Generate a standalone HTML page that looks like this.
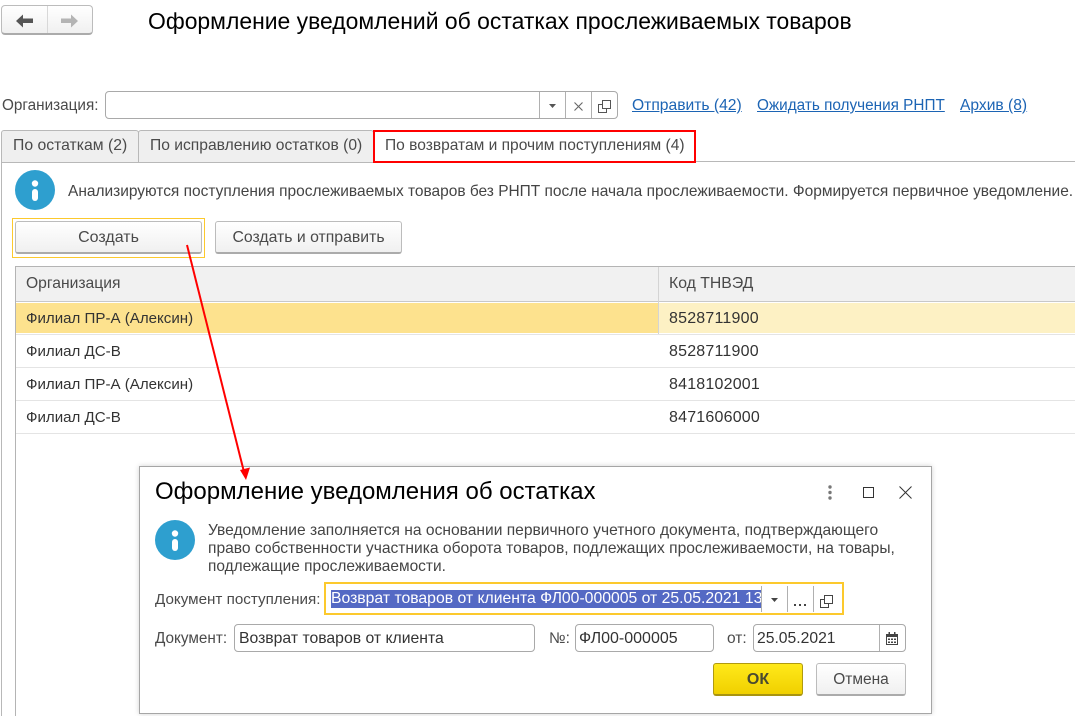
<!DOCTYPE html>
<html lang="ru"><head><meta charset="utf-8"><title>Оформление уведомлений</title>
<style>
html,body{margin:0;padding:0;background:#fff}
body{width:1075px;height:716px;position:relative;overflow:hidden;font-family:"Liberation Sans",Arial,sans-serif;font-size:15.5px;color:#4a4a4a}
.a{position:absolute;box-sizing:border-box}
.t{position:absolute;white-space:nowrap;line-height:18px;height:18px}
.btn{position:absolute;box-sizing:border-box;border:1px solid #bcbcbc;border-bottom:2px solid #ababab;border-radius:3px;background:linear-gradient(#fff,#f0f0f0);text-align:center;color:#4a4a4a}
.fld{position:absolute;box-sizing:border-box;border:1px solid #a9a9a9;border-radius:4px;background:#fff}
.v{position:absolute;width:1px;background:#b0b0b0}
.d{color:#333}
.r{font-size:15.1px}
.n{font-size:16px;letter-spacing:.2px}
a{color:#1c64b4;text-decoration:underline}
</style></head><body>

<!-- nav -->
<div class="btn" style="left:1px;top:5px;width:92px;height:30px;border-radius:4px"></div>
<div class="v" style="left:47px;top:6px;height:27px;background:#d8d8d8"></div>
<svg class="a" style="left:16px;top:14px" width="18" height="14"><path d="M0 7L7 .5V4.500H17V9H7V13.500Z" fill="#555"/></svg>
<svg class="a" style="left:61px;top:14px" width="18" height="14"><path d="M17 7L10 .5V4.500H0V9H10V13.500Z" fill="#b4b4b4"/></svg>
<div class="t" style="left:148px;top:8px;font-size:22.93px;line-height:26px;height:26px;color:#000">Оформление уведомлений об остатках прослеживаемых товаров</div>

<!-- org row -->
<div class="t" style="left:2px;top:97px;font-size:15.3px">Организация:</div>
<div class="fld" style="left:105px;top:91px;width:513px;height:28px"></div>
<div class="v" style="left:539px;top:92px;height:26px"></div>
<div class="v" style="left:565px;top:92px;height:26px"></div>
<div class="v" style="left:591px;top:92px;height:26px"></div>
<svg class="a" style="left:549px;top:104px" width="7" height="4"><path d="M0 0H7L3.500 4Z" fill="#555"/></svg>
<svg class="a" style="left:574px;top:102px" width="9" height="9"><path d="M.5 .5L8.500 8.500M8.500 .5L.5 8.500" stroke="#666" stroke-width="1.100" fill="none"/></svg>
<svg class="a" style="left:598px;top:100px" width="13" height="13"><path d="M4.500 .5H12.500V8.500H4.500ZM4.500 4.500H.5V12.500H8.500V8.500" stroke="#555" fill="none"/></svg>
<a class="t" style="left:632px;top:97px;font-size:15.65px">Отправить (42)</a>
<a class="t" style="left:757px;top:97px;font-size:15.32px">Ожидать получения РНПТ</a>
<a class="t" style="left:960px;top:97px;font-size:15.6px">Архив (8)</a>

<!-- tabs -->
<div class="a" style="left:1px;top:130px;width:138px;height:33px;background:#efefef;border:1px solid #b8b8b8;border-radius:3px 3px 0 0"></div>
<div class="a" style="left:138px;top:130px;width:236px;height:33px;background:#efefef;border:1px solid #b8b8b8;border-radius:3px 3px 0 0"></div>
<div class="a" style="left:374px;top:161px;width:701px;height:1px;background:#b8b8b8"></div>
<div class="a" style="left:1px;top:162px;width:1px;height:554px;background:#b8b8b8"></div>
<div class="a" style="left:373px;top:130px;width:323px;height:33px;border:2px solid #f00"></div>
<div class="t" style="left:13px;top:137px;font-size:15.75px">По остаткам (2)</div>
<div class="t" style="left:150px;top:137px;font-size:15.63px">По исправлению остатков (0)</div>
<div class="t" style="left:385px;top:137px;font-size:15.55px">По возвратам и прочим поступлениям (4)</div>

<!-- info -->
<svg class="a" style="left:15px;top:170px" width="40" height="40"><circle cx="20" cy="20" r="20" fill="#2e9fcf"/><circle cx="20" cy="13.500" r="3.200" fill="#fff"/><rect x="17" y="19" width="6" height="12" rx="3" fill="#fff"/></svg>
<div class="t" style="left:68px;top:183px;color:#444;font-size:15.48px">Анализируются поступления прослеживаемых товаров без РНПТ после начала прослеживаемости. Формируется первичное уведомление.</div>

<!-- buttons -->
<div class="a" style="left:12px;top:218px;width:193px;height:40px;border:1px solid #fcc92d"></div>
<div class="btn" style="left:15px;top:221px;width:187px;height:33px;line-height:32px;font-size:16px">Создать</div>
<div class="btn" style="left:215px;top:221px;width:187px;height:33px;line-height:32px;font-size:15.8px">Создать и отправить</div>

<!-- grid -->
<div class="a" style="left:15px;top:266px;width:1060px;height:450px;border-left:1px solid #b4b4b4;border-top:1px solid #b4b4b4"></div>
<div class="a" style="left:16px;top:267px;width:1059px;height:35px;background:#f1f1f1;border-bottom:1px solid #c8c8c8"></div>
<div class="a" style="left:658px;top:267px;width:1px;height:67px;background:#d4d4d4"></div>
<div class="t" style="left:26px;top:275px;font-size:15.67px">Организация</div>
<div class="t" style="left:669px;top:275px;font-size:15.8px">Код ТНВЭД</div>
<div class="a" style="left:16px;top:303px;width:642px;height:30px;background:#fde28e"></div>
<div class="a" style="left:659px;top:303px;width:416px;height:30px;background:#fdf1c4"></div>
<div class="a" style="left:16px;top:334px;width:1059px;height:1px;background:#e4e4e4"></div>
<div class="a" style="left:16px;top:367px;width:1059px;height:1px;background:#e4e4e4"></div>
<div class="a" style="left:16px;top:400px;width:1059px;height:1px;background:#e4e4e4"></div>
<div class="a" style="left:16px;top:433px;width:1059px;height:1px;background:#e4e4e4"></div>
<div class="t d r" style="left:26px;top:310px">Филиал ПР-А (Алексин)</div><div class="t d n" style="left:669px;top:310px">8528711900</div>
<div class="t d r" style="left:26px;top:343px">Филиал ДС-В</div><div class="t d n" style="left:669px;top:343px">8528711900</div>
<div class="t d r" style="left:26px;top:376px">Филиал ПР-А (Алексин)</div><div class="t d n" style="left:669px;top:376px">8418102001</div>
<div class="t d r" style="left:26px;top:409px">Филиал ДС-В</div><div class="t d n" style="left:669px;top:409px">8471606000</div>

<!-- dialog -->
<div class="a" style="left:139px;top:466px;width:793px;height:248px;background:#fff;border:1px solid #a6a6a6;box-shadow:0 0 5px rgba(0,0,0,.18)"></div>
<div class="t" style="left:155px;top:478px;font-size:24px;line-height:28px;height:28px;color:#000">Оформление уведомления об остатках</div>
<svg class="a" style="left:827px;top:485px" width="6" height="15"><circle cx="3" cy="2" r="1.700" fill="#777"/><circle cx="3" cy="7.500" r="1.700" fill="#777"/><circle cx="3" cy="13" r="1.700" fill="#777"/></svg>
<div class="a" style="left:863px;top:487px;width:11px;height:11px;border:1px solid #333"></div>
<svg class="a" style="left:899px;top:486px" width="13" height="13"><path d="M.5 .5L12.500 12.500M12.500 .5L.5 12.500" stroke="#333" fill="none"/></svg>
<svg class="a" style="left:155px;top:520px" width="40" height="40"><circle cx="20" cy="20" r="20" fill="#2e9fcf"/><circle cx="20" cy="13.500" r="3.200" fill="#fff"/><rect x="17" y="19" width="6" height="12" rx="3" fill="#fff"/></svg>
<div class="t" style="left:208px;top:522px;color:#444;font-size:15.58px">Уведомление заполняется на основании первичного учетного документа, подтверждающего</div>
<div class="t" style="left:208px;top:540px;color:#444;font-size:15.6px">право собственности участника оборота товаров, подлежащих прослеживаемости, на товары,</div>
<div class="t" style="left:208px;top:558px;color:#444;font-size:15.45px">подлежащие прослеживаемости.</div>

<div class="t" style="left:155px;top:591px;font-size:15.2px">Документ поступления:</div>
<div class="a" style="left:324px;top:582px;width:520px;height:33px;border:2px solid #fcc92d"></div>
<div class="a" style="left:331px;top:590px;width:430px;height:18px;background:#5469c4;color:#fff;line-height:18px;white-space:nowrap;overflow:hidden;font-size:15.75px">Возврат товаров от клиента ФЛ00-000005 от 25.05.2021 13:00:00</div>
<div class="v" style="left:761px;top:586px;height:26px"></div>
<div class="v" style="left:787px;top:586px;height:26px"></div>
<div class="v" style="left:813px;top:586px;height:26px"></div>
<svg class="a" style="left:771px;top:598px" width="7" height="4"><path d="M0 0H7L3.500 4Z" fill="#444"/></svg>
<svg class="a" style="left:794px;top:604px" width="12" height="3"><path d="M0 0H2V2H0ZM5 0H7V2H5ZM10 0H12V2H10Z" fill="#444"/></svg>
<svg class="a" style="left:820px;top:595px" width="13" height="13"><path d="M4.500 .5H12.500V8.500H4.500ZM4.500 4.500H.5V12.500H8.500V8.500" stroke="#444" fill="none"/></svg>

<div class="t" style="left:155px;top:630px;font-size:15.3px">Документ:</div>
<div class="fld" style="left:234px;top:624px;width:301px;height:28px"></div>
<div class="t d" style="left:239px;top:630px;font-size:15.75px">Возврат товаров от клиента</div>
<div class="t" style="left:549px;top:630px">№:</div>
<div class="fld" style="left:575px;top:624px;width:139px;height:28px"></div>
<div class="t d" style="left:579px;top:630px;font-size:16px">ФЛ00-000005</div>
<div class="t" style="left:727px;top:630px">от:</div>
<div class="fld" style="left:753px;top:624px;width:153px;height:28px"></div>
<div class="v" style="left:879px;top:625px;height:26px"></div>
<div class="t d" style="left:757px;top:630px;font-size:15.7px">25.05.2021</div>
<svg class="a" style="left:886px;top:632px" width="13" height="13"><path d="M.5 3H11.500V12.500H.5Z" fill="none" stroke="#444"/><path d="M0 2H12V5H0ZM2.500 0H4V2H2.500ZM8 0H9.500V2H8ZM2 6.500H4V8H2ZM5 6.500H7V8H5ZM8 6.500H10V8H8ZM2 9.500H4V11H2ZM5 9.500H7V11H5ZM8 9.500H10V11H8Z" fill="#444"/></svg>

<div class="a" style="left:713px;top:663px;width:90px;height:33px;border:1px solid #b09a10;border-bottom:2px solid #a89410;border-radius:3px;background:linear-gradient(#ffe91a,#f0d000);text-align:center;font-weight:bold;line-height:32px;color:#4a4a30;font-size:16px">ОК</div>
<div class="btn" style="left:816px;top:663px;width:90px;height:33px;line-height:32px">Отмена</div>

<!-- arrow -->
<svg class="a" style="left:0;top:0;pointer-events:none" width="1075" height="716"><path d="M187 245L244 472" stroke="#f00" stroke-width="2" fill="none"/><path d="M246 480L240 470L250 467.500Z" fill="#f00"/></svg>
</body></html>
